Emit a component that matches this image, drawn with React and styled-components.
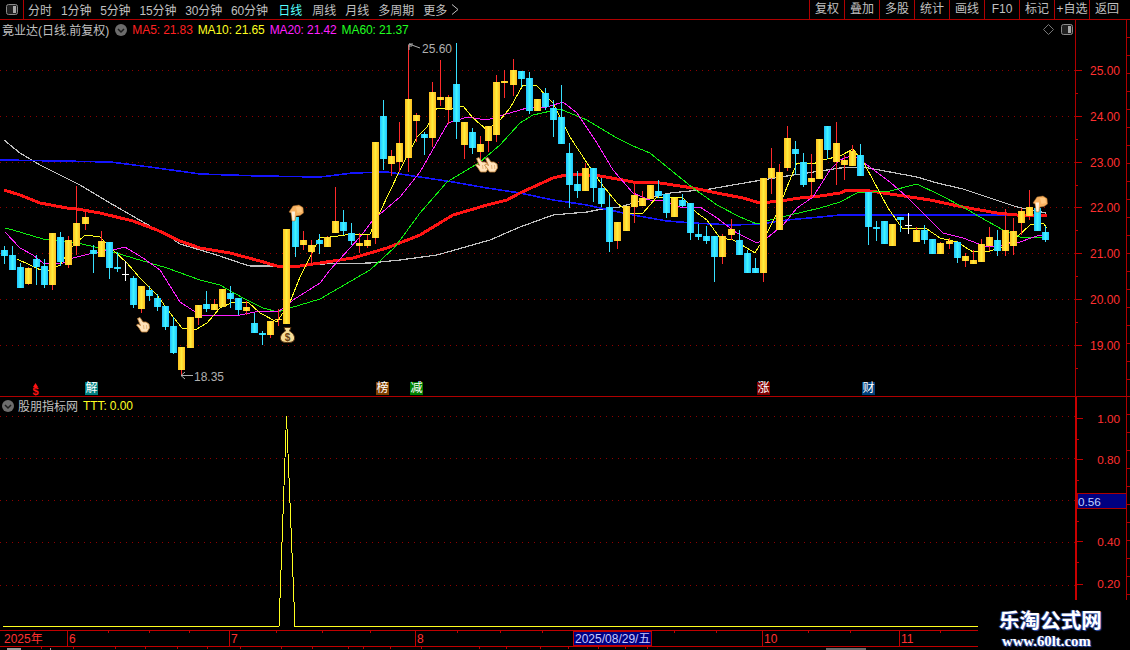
import React from "react";
import styled, { createGlobalStyle } from "styled-components";

// [body top, body bottom, wick top, wick bottom, kind] in page pixels
const candles = [
  [250, 256, 246, 264, "c"], [255, 270, 246, 270, "c"], [267, 288, 263, 288, "c"], [268, 284, 267, 285, "y"],
  [259, 267, 255, 285, "c"], [266, 285, 259, 288, "c"], [233, 285, 233, 290, "y"], [237, 262, 232, 266, "c"],
  [240, 265, 236, 268, "y"], [223, 246, 186, 255, "y"], [217, 224, 211, 230, "y"], [250, 254, 245, 273, "c"],
  [241, 257, 231, 257, "y"], [242, 268, 242, 279, "c"], [267, 269, 252, 272, "c"], [274, 275, 261, 281, "w"],
  [278, 305, 276, 308, "c"], [286, 309, 286, 313, "y"], [290, 296, 286, 301, "c"], [298, 307, 294, 311, "c"],
  [306, 327, 306, 330, "c"], [326, 353, 317, 354, "c"], [347, 370, 347, 375, "y"], [317, 348, 317, 348, "y"],
  [305, 318, 305, 325, "y"], [304, 309, 291, 312, "c"], [304, 310, 299, 310, "y"], [289, 307, 289, 307, "y"],
  [293, 299, 286, 308, "c"], [298, 310, 298, 315, "c"], [307, 311, 301, 315, "y"], [323, 333, 313, 333, "c"],
  [333, 335, 331, 345, "c"], [321, 335, 321, 338, "y"], [319, 320, 309, 326, "y"], [229, 324, 229, 324, "y"],
  [217, 247, 213, 257, "c"], [240, 245, 231, 250, "y"], [245, 252, 240, 265, "y"], [240, 244, 234, 254, "c"],
  [237, 247, 236, 247, "y"], [221, 233, 187, 233, "y"], [222, 231, 210, 235, "c"], [233, 241, 223, 245, "c"],
  [243, 246, 233, 253, "y"], [240, 246, 235, 248, "y"], [142, 238, 142, 244, "y"], [116, 159, 100, 170, "c"],
  [156, 164, 150, 176, "y"], [143, 162, 122, 172, "y"], [99, 158, 45, 172, "y"], [115, 121, 113, 142, "y"],
  [134, 138, 132, 155, "c"], [92, 138, 82, 147, "y"], [97, 100, 60, 106, "y"], [97, 110, 95, 124, "y"],
  [84, 122, 43, 139, "c"], [122, 145, 122, 159, "y"], [132, 148, 128, 154, "c"], [144, 152, 136, 160, "y"],
  [126, 141, 126, 152, "y"], [82, 135, 75, 142, "y"], [81, 83, 70, 98, "y"], [70, 85, 59, 96, "y"],
  [71, 79, 71, 87, "c"], [78, 111, 72, 114, "c"], [99, 111, 99, 111, "y"], [93, 107, 88, 110, "c"],
  [108, 120, 100, 137, "c"], [117, 144, 85, 144, "c"], [153, 185, 143, 208, "c"], [184, 191, 171, 198, "c"],
  [168, 191, 163, 191, "y"], [168, 188, 168, 202, "c"], [188, 204, 178, 207, "c"], [207, 242, 195, 252, "c"],
  [222, 241, 222, 249, "y"], [206, 231, 206, 231, "y"], [195, 207, 184, 223, "y"], [198, 206, 191, 206, "y"],
  [185, 199, 185, 199, "y"], [191, 196, 180, 198, "c"], [194, 213, 194, 218, "c"], [198, 217, 198, 217, "y"],
  [200, 206, 194, 207, "c"], [203, 233, 203, 240, "c"], [234, 237, 224, 240, "c"], [236, 241, 226, 244, "c"],
  [236, 257, 236, 282, "c"], [236, 257, 234, 264, "y"], [229, 235, 219, 240, "y"], [240, 255, 230, 255, "c"],
  [253, 273, 250, 273, "c"], [268, 273, 258, 273, "c"], [178, 273, 178, 282, "y"], [168, 178, 148, 194, "y"],
  [172, 230, 164, 230, "y"], [138, 168, 126, 171, "y"], [149, 154, 141, 175, "c"], [162, 185, 153, 187, "c"],
  [178, 182, 154, 198, "y"], [139, 179, 139, 179, "y"], [126, 150, 126, 159, "c"], [143, 162, 122, 185, "y"],
  [160, 165, 155, 180, "y"], [151, 166, 145, 166, "y"], [155, 176, 144, 176, "c"], [192, 227, 192, 245, "c"],
  [227, 229, 221, 241, "c"], [221, 244, 221, 244, "c"], [224, 246, 224, 246, "y"], [217, 220, 217, 232, "c"],
  [225, 226, 213, 234, "w"], [230, 242, 227, 242, "y"], [230, 240, 225, 244, "c"], [239, 254, 239, 254, "c"],
  [243, 254, 242, 254, "y"], [241, 244, 238, 249, "y"], [242, 258, 241, 263, "c"], [256, 261, 253, 267, "y"],
  [260, 264, 250, 264, "y"], [244, 262, 239, 262, "y"], [237, 246, 227, 251, "y"], [240, 251, 230, 256, "c"],
  [230, 251, 209, 256, "y"], [231, 246, 218, 255, "y"], [211, 223, 208, 235, "y"], [207, 216, 190, 220, "y"],
  [208, 231, 208, 231, "c"], [232, 240, 226, 242, "c"],
];

const grayLine = "4,140 20,153 40,165 70,180 80,185 110,203 150,226 170,237 180,244 200,250 220,256 240,263 250,266 267,266 287,266 320,264 370,263 400,260 437,255 490,240 520,227 553,215 587,212 607,208 620,207 650,198 670,193 710,189 750,182 787,176 827,170 840,168 863,167 890,172 917,177 937,183 963,189 990,198 1017,207 1046,213";
const redLine = "4,190 20,195 40,203 67,208 77,209 100,213 133,221 157,230 180,241 200,248 230,253 260,261 277,266 300,266 320,263 353,258 387,248 420,235 453,215 487,205 507,200 520,193 553,178 570,174 587,175 600,176 617,179 633,182 660,183 693,188 717,193 743,198 760,203 780,201 800,198 820,196 840,193 847,190 863,190 897,195 930,200 963,207 997,213 1017,215 1047,215";
const blueLine = "0,160 60,161 110,162 150,167 200,174 260,176 320,177 353,173 387,172 420,177 453,182 487,188 520,193 553,200 587,205 600,208 633,215 667,221 693,223 733,225 760,224 787,220 820,217 840,215 1047,215";
const greenLine = "5,228 13,230 43,239 77,243 100,248 133,258 167,268 200,280 220,285 243,298 263,308 278,312 290,308 320,299 370,270 395,247 420,213 447,182 480,162 500,145 520,123 533,115 560,109 587,120 600,128 617,138 633,146 650,153 667,167 693,188 717,205 740,217 757,224 777,218 803,212 820,208 840,202 857,193 890,191 917,184 940,195 963,207 980,217 1003,230 1020,237 1043,237";
const magentaLine = "5,232 20,248 33,255 43,263 63,263 73,258 93,253 117,249 125,247 143,258 160,270 180,302 200,315 220,316 240,315 260,311 278,312 293,300 320,283 330,270 360,237 373,220 400,197 420,172 448,123 467,117 487,120 503,115 527,108 547,107 563,102 577,113 597,143 613,170 633,193 650,200 660,200 680,207 700,207 717,218 737,233 757,243 767,238 783,225 797,208 813,197 830,170 840,160 853,155 867,165 890,182 907,197 927,217 943,233 963,238 987,247 1017,243 1037,236 1045,235";
const yellowLine = "17,259 30,265 45,272 60,265 72,247 85,235 100,237 113,250 127,263 140,278 157,295 170,313 182,328 195,330 207,323 220,308 233,302 248,302 260,313 277,322 290,302 300,277 320,237 330,237 353,234 370,234 380,212 400,170 417,137 427,127 437,108 453,108 463,106 473,118 487,130 500,120 510,108 523,85 537,86 553,103 570,137 587,163 600,182 617,203 630,214 643,213 657,197 670,197 683,198 697,213 707,220 720,238 733,240 747,248 755,253 767,233 777,213 787,187 797,163 813,164 823,160 840,156 853,149 865,165 873,180 888,208 902,228 927,229 940,238 957,242 973,252 990,251 1003,247 1017,237 1030,225 1043,223 1047,228";

const priceLabels = [["25.00", 70], ["24.00", 116], ["23.00", 162], ["22.00", 207], ["21.00", 253], ["20.00", 299], ["19.00", 345]];
const indicatorLabels = [["1.00", 416], ["0.80", 458], ["0.40", 542], ["0.20", 585]];
const leftTools = [
  { label: "分时" }, { label: "1分钟", num: true }, { label: "5分钟", num: true }, { label: "15分钟", num: true },
  { label: "30分钟", num: true }, { label: "60分钟", num: true }, { label: "日线", active: true }, { label: "周线" },
  { label: "月线" }, { label: "多周期" },
];
const rightTools = ["复权", "叠加", "多股", "统计", "画线", "F10", "标记", "+自选", "返回"];
const tags = [
  { text: "解", left: 85, bg: "#008080" },
  { text: "榜", left: 376, bg: "#804000" },
  { text: "减", left: 410, bg: "#008000" },
  { text: "涨", left: 757, bg: "#800000" },
  { text: "财", left: 862, bg: "#003f7a" },
];
const months = [["6", 67], ["7", 229], ["8", 415], ["10", 762], ["11", 899]];
const minorTicks = [108, 149, 189, 276, 322, 370, 457, 500, 542, 674, 716, 808, 850, 940];
const lowerTicks = [41, 73, 115, 145, 177, 207, 240, 281, 312, 348, 363, 390, 421, 479, 506, 540, 568, 598, 625, 647];

const GlobalStyle = createGlobalStyle`
  html, body { margin: 0; padding: 0; background: #000; }
  body { font-family: "Liberation Sans", "Noto Sans CJK SC", sans-serif; }
`;

const Page = styled.div`
  position: relative;
  width: 1130px;
  height: 650px;
  overflow: hidden;
  background: #000;
  color: #c0c0c0;
  font-size: 12px;
`;
const Toolbar = styled.div`
  display: flex;
  justify-content: space-between;
  height: 20px;
  box-sizing: border-box;
  border-bottom: 1px solid #b00000;
`;
const ToolGroup = styled.div`
  display: flex;
  align-items: center;
  gap: ${(p) => p.$gap || 0}px;
`;
const SideToggle = styled.div`
  display: flex;
  align-items: center;
  justify-content: center;
  width: 24px;
  height: 19px;
  box-sizing: border-box;
  border-right: 1px solid #b00000;
  margin-right: -5px;
`;
const Tool = styled.span`
  display: flex;
  align-items: center;
  color: ${(p) => (p.$active ? "#5ff" : "#c0c0c0")};
  letter-spacing: ${(p) => (p.$num ? "-0.15px" : "0")};
  margin: ${(p) => (p.$active ? "0 1px 0 1.5px" : "0")};
  white-space: nowrap;
`;
const MoreChevron = styled.svg`
  margin-left: 4px;
`;
const RightTool = styled.span`
  width: 35px;
  height: 19px;
  line-height: 18px;
  box-sizing: border-box;
  border-left: 1px solid #b00000;
  text-align: center;
  white-space: nowrap;
  &:last-child { width: 41px; padding-right: 6px; }
`;
const Panel = styled.div`
  display: flex;
  height: ${(p) => p.$height}px;
  box-sizing: border-box;
  border-bottom: ${(p) => (p.$rule ? "1px solid #b00000" : "none")};
`;
const ChartArea = styled.div`
  position: relative;
  width: 1075px;
  flex: none;
`;
const ChartSvg = styled.svg`
  display: block;
  width: 100%;
  height: 100%;
`;
const AxisBox = styled.div`
  width: 52px;
  flex: none;
  box-sizing: border-box;
  border-left: ${(p) => p.$lw || 1}px solid ${(p) => p.$color || "#b00000"};
  border-right: 1px solid #b00000;
`;
const TickStrip = styled.div`
  width: 3px;
  flex: none;
  background: repeating-linear-gradient(to bottom, #000 0 17px, #b00000 17px 18px);
`;
const Legend = styled.div`
  position: absolute;
  top: ${(p) => p.$top}px;
  left: 2px;
  display: flex;
  align-items: center;
  gap: ${(p) => p.$gap}px;
  white-space: nowrap;
`;
const LegendItem = styled.span`
  display: flex;
  color: ${(p) => p.$color || "#c0c0c0"};
  margin-left: ${(p) => p.$ml || 0}px;
  letter-spacing: ${(p) => (p.$color ? "-0.1px" : "0")};
`;
const Tag = styled.span`
  position: absolute;
  top: 362px;
  left: ${(p) => p.$left}px;
  width: 13px;
  height: 13px;
  line-height: 13px;
  text-align: center;
  font-size: 12px;
  color: #fff;
  background: ${(p) => p.$bg};
`;
const CornerIcons = styled.div`
  position: absolute;
  top: 4px;
  right: 2px;
  display: flex;
  align-items: center;
  gap: 7px;
`;
const TimeAxis = styled.div`
  display: flex;
  height: 17px;
  box-sizing: border-box;
  border-top: 1px solid #c00000;
  border-bottom: 1px solid #c00000;
`;
const TimeSvg = styled.svg`
  display: block;
  width: 1130px;
  height: 15px;
`;
const LowerStrip = styled.svg`
  display: block;
  width: 1130px;
  height: 3px;
`;
const Watermark = styled.div`
  position: absolute;
  left: 978px;
  top: 600px;
  width: 152px;
  height: 50px;
  background: #000;
  display: flex;
  flex-direction: column;
  align-items: flex-start;
  padding-left: 21px;
  box-sizing: border-box;
`;
const WatermarkTitle = styled.div`
  font: 700 20.6px/24px "Noto Sans CJK SC", sans-serif;
  margin-top: 7px;
  color: #fff;
  text-shadow: 1px 1px 1px #3050b0, -1px 0 1px #3050b0;
`;
const WatermarkUrl = styled.div`
  font: 700 14.8px/16px "Liberation Serif", serif;
  margin: 2px 0 0 3px;
  color: #fff;
  text-shadow: 1px 1px 1px #3050b0, -1px 0 1px #3050b0;
`;

const PanelIcon = () => (
  <svg width="12" height="11" viewBox="0 0 12 11">
    <rect x="0.5" y="0.5" width="11" height="10" rx="2" fill="#202020" stroke="#8a8a8a" />
    <rect x="7" y="2" width="3" height="7" fill="#a8a8a8" />
  </svg>
);
const DiamondIcon = () => (
  <svg width="11" height="11" viewBox="0 0 11 11">
    <path d="M5.5 0.5 L10.5 5.5 L5.5 10.5 L0.5 5.5 Z" fill="none" stroke="#777" />
  </svg>
);
const RoundChevron = () => (
  <svg width="12" height="12" viewBox="0 0 12 12">
    <circle cx="6" cy="6" r="6" fill="#6c6c6c" />
    <path d="M3 5 L6 8 L9 5" fill="none" stroke="#1c1c1c" strokeWidth="1.5" />
  </svg>
);

// index finger up, fat palm below
const PointerHand = ({ x, y }) => (
  <g transform={`translate(${x} ${y})`}>
    <path
      d="M1.5 1.5 L4 0.5 L7 5 L10 5 L13 7 L13.5 11 L11 15 L5.5 15 L3 11 L0.5 8 L2 7 L4.5 8.5 Z"
      fill="#ffe2ba"
      stroke="#c08038"
      strokeWidth="0.8"
    />
    <path d="M7.5 8 L8 12 M10.5 8 L10.8 12" stroke="#e0a868" strokeWidth="0.8" fill="none" />
  </g>
);
// orange fist with the finger pointing down-left
const FistHand = ({ x, y }) => (
  <g transform={`translate(${x} ${y})`}>
    <path d="M4 1 L10 0 L14 2.5 L14.5 8 L11 10.5 L7 11 L6 16 L3 16 L2 8 L0 7 Z" fill="#f8b262" stroke="#a86a28" strokeWidth="0.5" />
    <path d="M2.5 6.5 L6 6.5 L5.5 15.5 L3.5 15.5 Z" fill="#fff0dc" />
    <path d="M7 2 L12 2 L13 7 L8.5 8 Z" fill="#ffc880" />
  </g>
);
const MoneyBag = ({ x, y }) => (
  <g transform={`translate(${x} ${y})`}>
    <path d="M4 0.5 L11 0.5 L9.5 4 C13 6 15 9 14.5 12 C14 15 11 15.5 7.5 15.5 C4 15.5 1 15 0.5 12 C0 9 2 6 5.5 4 Z" fill="#f6dc96" stroke="#5a3410" strokeWidth="1" />
    <text x="7.5" y="13.5" textAnchor="middle" fontSize="10" fontWeight="700" fill="#6a4010" fontFamily="Liberation Sans">$</text>
  </g>
);

const candleX = (i) => Math.floor(4.3 + i * 8.075);
const fills = { y: "url(#upBody)", c: "url(#downBody)", w: "#fff" };
const wicks = { y: "#ff2a2a", c: "#38e0ff", w: "#fff" };

const Candle = ({ data, index }) => {
  const [top, bottom, wickTop, wickBottom, kind] = data;
  const x = candleX(index);
  return (
    <g>
      <rect x={x} y={wickTop} width="1" height={wickBottom - wickTop} fill={wicks[kind]} />
      <rect x={x - 3} y={top} width="7" height={Math.max(bottom - top, 1)} fill={fills[kind]} />
    </g>
  );
};

const GridLines = ({ ys }) =>
  ys.map((y) => (
    <line key={y} x1="0" x2="1075" y1={y + 0.5} y2={y + 0.5} stroke="#900000" strokeDasharray="1 5" />
  ));

const PriceChart = () => (
  <ChartSvg viewBox="0 20 1075 376" shapeRendering="crispEdges">
    <defs>
      <linearGradient id="upBody" x1="0" x2="1" y1="0" y2="0">
        <stop offset="0" stopColor="#ffc020" />
        <stop offset="0.5" stopColor="#ffec3c" />
        <stop offset="1" stopColor="#ffbc20" />
      </linearGradient>
      <linearGradient id="downBody" x1="0" x2="1" y1="0" y2="0">
        <stop offset="0" stopColor="#20c0ff" />
        <stop offset="0.5" stopColor="#40f4ff" />
        <stop offset="1" stopColor="#20c4ff" />
      </linearGradient>
    </defs>
    <GridLines ys={priceLabels.map((l) => l[1])} />
    <polyline points={grayLine} fill="none" stroke="#c0c0c0" strokeWidth="1.2" />
    <polyline points={blueLine} fill="none" stroke="#1414ff" strokeWidth="1.6" />
    <polyline points={redLine} fill="none" stroke="#ff1414" strokeWidth="3" />
    <polyline points={greenLine} fill="none" stroke="#10f010" strokeWidth="1" />
    <polyline points={magentaLine} fill="none" stroke="#ff20ff" strokeWidth="1" />
    <polyline points={yellowLine} fill="none" stroke="#ffff20" strokeWidth="1" />
    {candles.map((c, i) => (
      <Candle key={i} data={c} index={i} />
    ))}
    <g shapeRendering="auto">
      <PointerHand x={136} y={317} />
      <PointerHand x={475} y={157} />
      <PointerHand x={484} y={157} />
      <FistHand x={289} y={205} />
      <FistHand x={1033} y={196} />
      <MoneyBag x={280} y={327} />
      <path d="M33 387 L35.5 383 L38 387 Z" fill="#ff1414" />
      <text x="35.5" y="395" textAnchor="middle" fontSize="11" fontWeight="700" fill="#ff1414" fontFamily="Liberation Sans">$</text>
      <path d="M409 50 L409 44 L420 48 M409 44 L413 44 M409 46 L412 46" fill="none" stroke="#b0b0b0" />
      <text x="422" y="53" fontSize="12" fill="#b0b0b0" fontFamily="Liberation Sans">25.60</text>
      <path d="M181 375.5 L193 375.5 M181 375.5 L185 372 M181 375.5 L185 379" fill="none" stroke="#b0b0b0" />
      <text x="194" y="381" fontSize="12" fill="#b0b0b0" fontFamily="Liberation Sans">18.35</text>
    </g>
  </ChartSvg>
);

const PriceAxis = () => (
  <ChartSvg viewBox="1076 20 50 376">
    <g shapeRendering="crispEdges">
      {priceLabels.map(([, y]) => (
        <rect key={y} x="1076" y={y} width="6" height="1" fill="#c00000" />
      ))}
      {priceLabels.map(([, y]) => (
        <rect key={y} x="1076" y={y + 23} width="2" height="1" fill="#c00000" />
      ))}
    </g>
    {priceLabels.map(([text, y]) => (
      <text key={text} x="1120" y={y + 5} textAnchor="end" fontSize="12" fill="#ff3030" fontFamily="Liberation Sans">
        {text}
      </text>
    ))}
  </ChartSvg>
);

const IndicatorChart = () => (
  <ChartSvg viewBox="0 397 1075 233" shapeRendering="crispEdges">
    <GridLines ys={[416, 458, 500, 542, 585]} />
    <polyline points="3,626.5 279,626.5 286.5,416 295,626.5 978,626.5" fill="none" stroke="#ffff20" strokeWidth="1" />
  </ChartSvg>
);

const IndicatorAxis = () => (
  <ChartSvg viewBox="1076 397 50 233">
    <g shapeRendering="crispEdges">
      {[416, 458, 500, 542, 585].map((y) => (
        <rect key={y} x="1076" y={y} width="6" height="1" fill="#c00000" />
      ))}
      {[437, 479, 521, 563, 606].map((y) => (
        <rect key={y} x="1076" y={y} width="2" height="1" fill="#c00000" />
      ))}
      <rect x="1076" y="493.5" width="50" height="15" fill="#000080" stroke="#b00000" />
    </g>
    {indicatorLabels.map(([text, y]) => (
      <text key={text} x="1120" y={y + 5} textAnchor="end" fontSize="12" fill="#ff3030" fontFamily="Liberation Sans">
        {text}
      </text>
    ))}
    <text x="1077" y="506" fontSize="12" fill="#c0d0ff" fontFamily="Liberation Sans">0.56</text>
  </ChartSvg>
);

const DateAxis = () => (
  <TimeSvg viewBox="0 631 1130 15">
    <g shapeRendering="crispEdges">
      {months.map(([, x]) => (
        <rect key={x} x={x} y="631" width="1" height="15" fill="#c00000" />
      ))}
      {minorTicks.map((x) => (
        <rect key={x} x={x} y="631" width="1" height="2" fill="#c00000" />
      ))}
      <rect x="573.5" y="631.5" width="78" height="14" fill="#000080" stroke="#c00000" />
    </g>
    <text x="4" y="643" fontSize="12" fill="#ff3030" fontFamily="Liberation Sans, Noto Sans CJK SC">2025年</text>
    {months.map(([text, x]) => (
      <text key={text} x={x + 2} y="643" fontSize="12" fill="#ff3030" fontFamily="Liberation Sans">
        {text}
      </text>
    ))}
    <text x="575" y="643" fontSize="12" fill="#c8c8ff" fontFamily="Liberation Sans, Noto Sans CJK SC">2025/08/29/五</text>
  </TimeSvg>
);

const Lower = () => (
  <LowerStrip viewBox="0 647 1130 3" shapeRendering="crispEdges">
    {lowerTicks.map((x) => (
      <rect key={x} x={x} y="647" width="1" height="2" fill="#c00000" />
    ))}
    <rect x="7" y="648" width="14" height="2" fill="#9a9a9a" />
    <rect x="50" y="648" width="1" height="2" fill="#9a9a9a" />
    <rect x="826" y="648" width="40" height="2" fill="#6a6a6a" />
  </LowerStrip>
);

export default function App() {
  return (
    <Page>
      <GlobalStyle />
      <Toolbar>
        <ToolGroup $gap={9}>
          <SideToggle>
            <PanelIcon />
          </SideToggle>
          {leftTools.map((t) => (
            <Tool key={t.label} $active={t.active} $num={t.num}>
              {t.label}
            </Tool>
          ))}
          <Tool>
            更多
            <MoreChevron width="9" height="11" viewBox="0 0 9 11">
              <path d="M1 0.5 L7 5.5 L1 10.5" fill="none" stroke="#c0c0c0" />
            </MoreChevron>
          </Tool>
        </ToolGroup>
        <ToolGroup>
          {rightTools.map((t) => (
            <RightTool key={t}>{t}</RightTool>
          ))}
        </ToolGroup>
      </Toolbar>

      <Panel $height={377} $rule>
        <ChartArea>
          <PriceChart />
          <Legend $top={1} $gap={5}>
            <LegendItem>竟业达(日线.前复权)</LegendItem>
            <LegendItem $ml={1}>
              <RoundChevron />
            </LegendItem>
            <LegendItem $color="#ff2020">MA5: 21.83</LegendItem>
            <LegendItem $color="#ffff20">MA10: 21.65</LegendItem>
            <LegendItem $color="#ff20ff">MA20: 21.42</LegendItem>
            <LegendItem $color="#20ff20">MA60: 21.37</LegendItem>
          </Legend>
          <CornerIcons>
            <DiamondIcon />
            <PanelIcon />
          </CornerIcons>
          {tags.map((t) => (
            <Tag key={t.text} $left={t.left} $bg={t.bg}>
              {t.text}
            </Tag>
          ))}
        </ChartArea>
        <AxisBox>
          <PriceAxis />
        </AxisBox>
        <TickStrip />
      </Panel>

      <Panel $height={233}>
        <ChartArea>
          <IndicatorChart />
          <Legend $top={0} $gap={4}>
            <RoundChevron />
            <LegendItem>股朋指标网</LegendItem>
            <LegendItem $color="#ffff20" $ml={1}>TTT: 0.00</LegendItem>
          </Legend>
        </ChartArea>
        <AxisBox $lw={2} $color="#c80000">
          <IndicatorAxis />
        </AxisBox>
        <TickStrip />
      </Panel>

      <TimeAxis>
        <DateAxis />
      </TimeAxis>
      <Lower />

      <Watermark>
        <WatermarkTitle>乐淘公式网</WatermarkTitle>
        <WatermarkUrl>www.60lt.com</WatermarkUrl>
      </Watermark>
    </Page>
  );
}
